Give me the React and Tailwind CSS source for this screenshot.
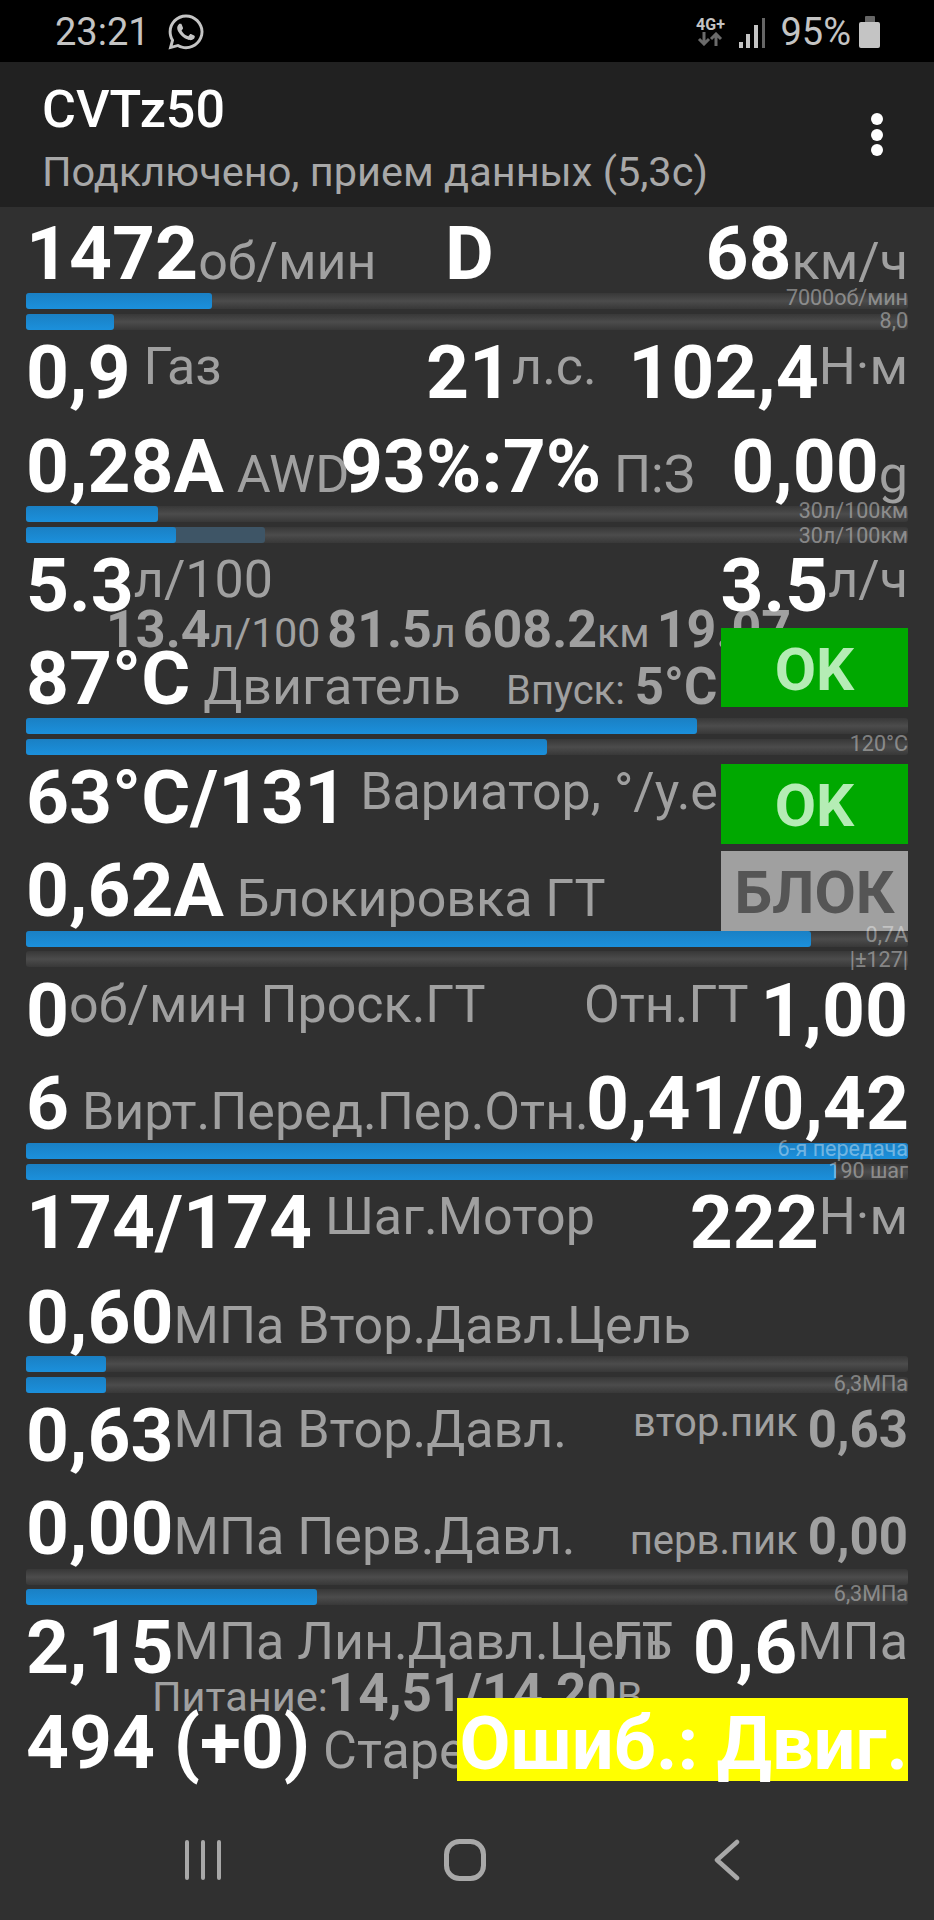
import { FaWhatsapp } from "react-icons/fa";

const FONT = "font-['Roboto','Liberation_Sans',sans-serif]";

// Big white reading
function V({ children, className = "" }) {
  return <span className={`text-[75px] font-bold text-white ${className}`}>{children}</span>;
}

// Grey caption beside a reading; raised captions sit above the shared baseline
function U({ children, up = false, className = "" }) {
  return (
    <span className={`text-[52px] leading-none font-normal text-[#a0a0a0] ${up ? "align-[14px]" : ""} ${className}`}>
      {children}
    </span>
  );
}

// Smaller grey bold reading
function S({ children, up = false, className = "text-[51px]" }) {
  return (
    <span className={`leading-none font-bold text-[#a0a0a0] ${up ? "align-[14px]" : ""} ${className}`}>{children}</span>
  );
}

// Small grey caption in front of a smaller reading
function C({ children, className = "" }) {
  return <span className={`text-[40px] leading-none font-normal text-[#a0a0a0] ${className}`}>{children}</span>;
}

function Row({ h, children, className = "" }) {
  return (
    <div className={`relative flex items-baseline whitespace-nowrap leading-[84px] ${h} ${className}`}>
      {children}
    </div>
  );
}

// Horizontal gauge with a faint scale caption at the right end
function Bar({ fill = 0, ghost = 0, label, labelPos = "bottom-[3px]", className = "" }) {
  return (
    <div className={`relative h-4 rounded-[3px] bg-gradient-to-b from-[#383838] via-[#4c4c4c] to-[#383838] ${className}`}>
      {ghost > 0 && (
        <div className="absolute left-0 top-0 h-full rounded-[3px] bg-[#3e5566]" style={{ width: ghost }} />
      )}
      {fill > 0 && (
        <div
          className="absolute left-0 top-0 h-full rounded-[3px] bg-gradient-to-b from-[#1a80c4] to-[#1b90dc]"
          style={{ width: fill }}
        />
      )}
      {label && (
        <span className={`absolute right-0 text-[21.5px] leading-4 font-normal whitespace-nowrap text-white/40 ${labelPos}`}>
          {label}
        </span>
      )}
    </div>
  );
}

function StatusBar() {
  return (
    <div className="flex h-[62px] items-center bg-black pl-[55px] pr-[54px] pt-[2px] text-[38px] leading-none text-[#c4c4c4]">
      <span>23:21</span>
      <FaWhatsapp className="ml-[16px] h-[40px] w-[40px]" />
      <div className="ml-auto flex items-center">
        <div className="mr-[13px] flex w-[32px] flex-col items-center">
          <span className="text-[16px] leading-[14px] font-bold">4G+</span>
          <svg width="28" height="14" viewBox="0 0 28 14" fill="none" stroke="#6a6a6a" strokeWidth="3">
            <path d="M8 0v12M3 7l5 5 5-5" />
            <path d="M20 14V2M15 7l5-5 5 5" />
          </svg>
        </div>
        <svg width="28" height="30" viewBox="0 0 28 30" className="mr-[13px] mt-[2px]">
          <rect x="0" y="24" width="4" height="6" fill="#c4c4c4" />
          <rect x="7" y="16" width="4" height="14" fill="#c4c4c4" />
          <rect x="15" y="7" width="4" height="23" fill="#c4c4c4" />
          <rect x="23" y="0" width="3" height="30" fill="#666" />
        </svg>
        <span>95%</span>
        <div className="ml-[8px] flex w-[21px] flex-col items-center">
          <div className="h-[6px] w-[10px] rounded-t-[1px] bg-[#666]" />
          <div className="h-[26px] w-[21px] rounded-[2px] bg-[#c4c4c4]" />
        </div>
      </div>
    </div>
  );
}

function AppBar() {
  return (
    <div className="flex h-[145px] items-start bg-[#212121] pl-[42px] pr-[51px]">
      <div>
        <div className="mt-[19px] text-[52px] leading-[58px] font-medium text-white">CVTz50</div>
        <div className="mt-[10px] text-[41.5px] leading-[46px] text-[#a8a8a8]">Подключено, прием данных (5,3с)</div>
      </div>
      <div className="ml-auto mt-[51px] flex flex-col gap-[3.5px]">
        <div className="h-3 w-3 rounded-full bg-white" />
        <div className="h-3 w-3 rounded-full bg-white" />
        <div className="h-3 w-3 rounded-full bg-white" />
      </div>
    </div>
  );
}

function NavBar() {
  return (
    <div className="flex h-[135px] items-start justify-center pr-[4px]">
      <div className="mt-[54px] grid w-[786px] grid-cols-3 justify-items-center text-[#a8a8a8]">
        <svg width="36" height="42" viewBox="0 0 36 42" fill="none" stroke="currentColor" strokeWidth="4" strokeLinecap="round">
          <path d="M2 3v36M18 3v36M34 3v36" />
        </svg>
        <svg width="42" height="42" viewBox="0 0 42 42" fill="none" stroke="currentColor" strokeWidth="5">
          <rect x="2.5" y="2.5" width="37" height="37" rx="13" />
        </svg>
        <svg width="26" height="42" viewBox="0 0 26 42" fill="none" stroke="currentColor" strokeWidth="4.5" strokeLinecap="round" strokeLinejoin="round">
          <path d="M23 3L3 21l20 18" />
        </svg>
      </div>
    </div>
  );
}

const WIDE = "text-[53px]";

export default function App() {
  return (
    <div className={`flex h-[1920px] w-[934px] flex-col overflow-hidden bg-[#303030] ${FONT}`}>
      <StatusBar />
      <AppBar />
      <main className="flex-1 px-[26px] pt-1">
        <Row h="h-[82px]">
          <div className="w-[419px]"><V>1472</V><U>об/мин</U></div>
          <V>D</V>
          <div className="ml-auto"><V>68</V><U>км/ч</U></div>
        </Row>
        <Bar fill={186} label="7000об/мин" />
        <Bar fill={88} label="8,0" labelPos="bottom-[1px]" className="mt-[5px]" />

        <Row h="h-[94px]">
          <div className="w-[400px]"><V>0,9</V><U up> Газ</U></div>
          <div><V>21</V><U up>л.с.</U></div>
          <div className="ml-auto"><V>102,4</V><U up>Н·м</U></div>
        </Row>
        <Row h="h-[82px]">
          <div className="w-[314px]"><V>0,28A</V><U> AWD</U></div>
          <div><V>93%:7%</V><U> П:З</U></div>
          <div className="ml-auto"><V>0,00</V><U>g</U></div>
        </Row>
        <Bar fill={132} label="30л/100км" />
        <Bar fill={150} ghost={239} label="30л/100км" labelPos="bottom-[-1px]" className="mt-[5px]" />

        <Row h="h-[61px]">
          <div><V>5.3</V><U up>л/100</U></div>
          <div className="ml-auto"><V>3.5</V><U up>л/ч</U></div>
        </Row>
        <div className="flex h-8 items-baseline whitespace-nowrap pl-[80px] leading-[56px]">
          <S className="text-[52px]">13.4</S><C className="text-[41px]">л/100</C>
          <S className="ml-[7px] text-[52px]">81.5</S><C className="text-[41px]">л</C>
          <S className="ml-[7px] text-[52px]">608.2</S><C className="text-[41px]">км</C>
          <S className="ml-[7px] text-[52px]">19.07</S>
        </div>
        <Row h="h-[82px]">
          <div className="w-[480px]"><V>87°C</V><U> Двигатель</U></div>
          <div><C>Впуск: </C><S>5°C</S></div>
          <div className="absolute right-0 top-[-8px] flex h-[79px] w-[187px] items-center justify-center bg-[#00a800] pt-[4px] text-[60px] leading-none font-bold text-[#b5ecb5]">
            OK
          </div>
        </Row>
        <Bar fill={671} />
        <Bar fill={521} label="120°C" className="mt-[5px]" />

        <Row h="h-[93px]">
          <div><V>63°C/131</V><U up> Вариатор, °/у.е.</U></div>
          <div className="absolute right-0 top-[9px] flex h-[80px] w-[187px] items-center justify-center bg-[#00a800] pt-[4px] text-[60px] leading-none font-bold text-[#b5ecb5]">
            OK
          </div>
        </Row>
        <Row h="h-[83px]">
          <div><V>0,62A</V><U> Блокировка ГТ</U></div>
          <div className="absolute right-0 top-[3px] flex h-[80px] w-[187px] items-center justify-center bg-[#a0a0a0] pt-[4px] text-[60px] leading-none font-bold text-[#555555]">
            БЛОК
          </div>
        </Row>
        <Bar fill={785} label="0,7A" labelPos="bottom-[4px]" />
        <Bar label="|±127|" labelPos="bottom-[-1px]" className="mt-[4px]" />

        <Row h="h-[93px]" className="mt-px">
          <div><V>0</V><U up>об/мин Проск.ГТ</U></div>
          <div className="ml-auto"><U up>Отн.ГТ </U><V>1,00</V></div>
        </Row>
        <Row h="h-[82px]">
          <div className="w-[560px]"><V>6</V><U> Вирт.Перед.Пер.Отн.</U></div>
          <div className="ml-auto"><V>0,41/0,42</V></div>
        </Row>
        <Bar fill={882} label="6-я передача" labelPos="bottom-[2px]" />
        <Bar fill={810} label="190 шаг" labelPos="bottom-[1px]" className="mt-[5px]" />

        <Row h="h-[95px]">
          <div><V>174/174</V><U up> Шаг.Мотор</U></div>
          <div className="ml-auto"><V>222</V><U up>Н·м</U></div>
        </Row>
        <Row h="h-[81px]">
          <div><V>0,60</V><U>МПа Втор.Давл.Цель</U></div>
        </Row>
        <Bar fill={80} />
        <Bar fill={80} label="6,3МПа" labelPos="bottom-[1px]" className="mt-[5px]" />

        <Row h="h-[93px]">
          <div><V>0,63</V><U up>МПа Втор.Давл.</U></div>
          <div className="ml-auto"><C className="align-[25px]">втор.пик </C><S up>0,63</S></div>
        </Row>
        <Row h="h-[83px]">
          <div><V>0,00</V><U>МПа Перв.Давл.</U></div>
          <div className="ml-auto"><C>перв.пик </C><S>0,00</S></div>
        </Row>
        <Bar />
        <Bar fill={291} label="6,3МПа" className="mt-1" />

        <Row h="h-[62px]">
          <div className="w-[560px]"><V>2,15</V><U up>МПа Лин.Давл.Цель</U></div>
          <div className="ml-auto"><U up>ГТ</U><V className="ml-[20px]">0,6</V><U up>МПа</U></div>
        </Row>
        <div className="flex h-[33px] items-baseline whitespace-nowrap pl-[126px] leading-[56px]">
          <C className="text-[41.5px]">Питание:</C>
          <S className={WIDE}>14,51/14,20</S>
          <C className="text-[41.5px]">В</C>
        </div>
        <Row h="h-[84px]">
          <div><V>494 (+0)</V><U> Старение</U></div>
          <div className="absolute right-0 top-[-2px] flex h-[83px] w-[451px] items-center justify-end bg-[#ffff00] pt-[8px] text-[74px] leading-none font-bold text-white">
            Ошиб.: Двиг.
          </div>
        </Row>
      </main>
      <NavBar />
    </div>
  );
}
